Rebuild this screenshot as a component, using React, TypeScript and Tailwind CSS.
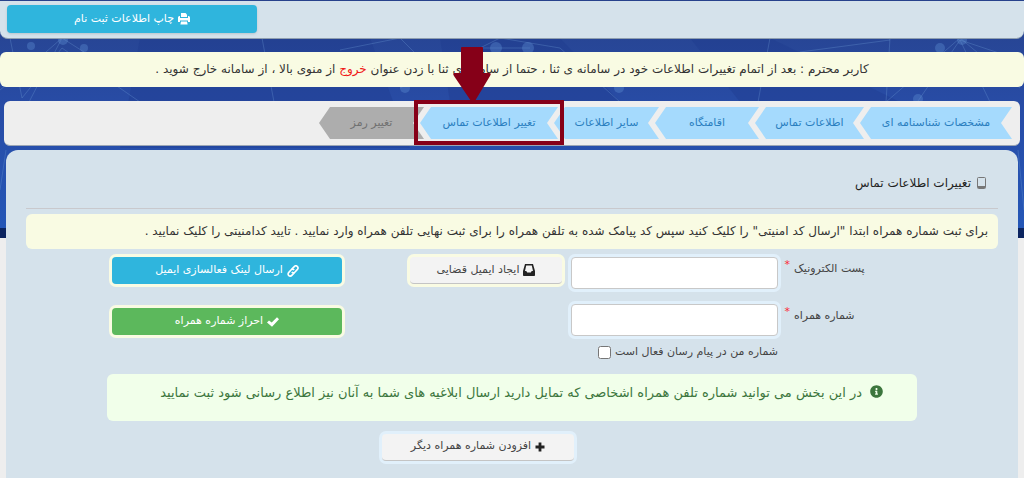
import type { ReactNode } from 'react';
import { FaInfoCircle } from 'react-icons/fa';

const steps = [
  { title: 'مشخصات شناسنامه ای', size: 'w-[152px]' },
  { title: 'اطلاعات تماس', size: 'w-[109px]' },
  { title: 'اقامتگاه', size: 'w-[104px]' },
  { title: 'سایر اطلاعات', size: 'w-[105px]' },
  { title: 'تغییر اطلاعات تماس', size: 'w-[138px]' },
  { title: 'تغییر رمز', size: 'w-[105px]' },
];

function Backdrop() {
  return (
    <svg
      aria-hidden="true"
      className="absolute inset-x-0 top-0 -z-10 h-[238px] w-full"
      viewBox="0 0 1024 238"
      preserveAspectRatio="none"
    >
      <defs>
        <linearGradient id="sky" x1="0" y1="0" x2="0" y2="1">
          <stop offset="0" stopColor="#27428c" />
          <stop offset="0.45" stopColor="#284ca6" />
          <stop offset="1" stopColor="#2457b8" />
        </linearGradient>
      </defs>
      <rect width="1024" height="238" fill="url(#sky)" />
      <path d="M140 38h230l40 110H120zM440 38h120l60 64H450zM690 38h80l130 64H740z" fill="#1d3a8c" opacity="0.35" />
      <path
        d="M0 90L46 52 62 38 84 52M10 38l12 60 40-50 78 54M62 38L28 104M262 38l12 64M340 50l60-12 40 40M400 88l100-50 60 10 60 54M480 48h50M770 38l-12 64M890 38l-4 64 74-64 60 50M960 40l30 62M918 101l42-61 60 20M800 52l90-12M0 190l6-40M1018 150l6 60"
        fill="none"
        stroke="#6f9ed8"
        strokeWidth="1"
        opacity="0.3"
      />
      <g fill="#5b8bd0" opacity="0.4">
        <circle cx="63" cy="40" r="5" />
        <circle cx="84" cy="48" r="4" />
        <circle cx="31" cy="46" r="4" />
        <circle cx="496" cy="48" r="6" />
        <circle cx="528" cy="48" r="6" />
        <circle cx="405" cy="88" r="5" />
        <circle cx="619" cy="88" r="5" />
        <circle cx="918" cy="99" r="5" />
        <circle cx="940" cy="48" r="5" />
        <circle cx="962" cy="40" r="5" />
      </g>
      <rect y="228" width="1024" height="10" fill="#0b2460" />
    </svg>
  );
}

function Notice({ children, className }: { children: ReactNode; className: string }) {
  return (
    <p className={`rounded-md bg-[#f9fbe3] text-[12px] leading-[35px] whitespace-nowrap text-[#333] ${className}`}>
      {children}
    </p>
  );
}

function PrintIcon() {
  return (
    <svg viewBox="0 0 12 12" className="size-3 shrink-0" fill="currentColor">
      <path d="M3 0h4.500L9 1.500V4H3z" />
      <path fillRule="evenodd" d="M1.500 3H2v2h8V3h.5A1.500 1.500 0 0 1 12 4.500V9h-2V7.500H2V9H0V4.500A1.500 1.500 0 0 1 1.500 3z" />
      <path d="M3 8.500h6l.6 3H2.400z" />
    </svg>
  );
}

function InboxIcon() {
  return (
    <svg viewBox="0 0 12 12" className="size-3 shrink-0" fill="#222">
      <path fillRule="evenodd" d="M2 0h8l2 7v4.200a.8.8 0 0 1-.8.8H.8a.8.8 0 0 1-.8-.8V7zm1.200 1.600L2 7h1.300l.9 1.600h3.600L8.700 7H10L8.800 1.600z" />
    </svg>
  );
}

function LinkIcon() {
  return (
    <svg viewBox="0 0 12 12" className="size-3 shrink-0" fill="none" stroke="currentColor" strokeWidth="1.600">
      <path d="M4.600 4.400l2.600-2.800a2 2 0 0 1 3.200 2.800L7.800 7.200a1.800 1.800 0 0 1-2.900-.4" />
      <path d="M7.400 7.600l-2.600 2.800a2 2 0 0 1-3.200-2.800l2.600-2.800a1.800 1.800 0 0 1 2.900.4" />
    </svg>
  );
}

function CheckIcon() {
  return (
    <svg viewBox="0 0 12 12" className="size-3 shrink-0" fill="currentColor">
      <path d="M10 1.200l2 2-7 7.600L0 6.600l2-2 2.700 2z" />
    </svg>
  );
}

function PlusIcon() {
  return (
    <svg viewBox="0 0 10 10" className="size-[10px] shrink-0" fill="#222">
      <path d="M3.600.5h2.800v3.100h3.100v2.800H6.400v3.100H3.600V6.400H.5V3.600h3.100z" />
    </svg>
  );
}

function PhoneIcon() {
  return (
    <svg viewBox="0 0 9 12" className="h-3 w-[9px] shrink-0" fill="none" stroke="#777">
      <rect x="0.500" y="0.500" width="8" height="11" rx="1" />
      <path d="M1 10h7" strokeWidth="2" />
    </svg>
  );
}

export default function App() {
  return (
    <div
      dir="rtl"
      lang="fa"
      className="relative isolate min-h-screen overflow-hidden bg-[#eee] pt-px font-['DejaVu_Sans',sans-serif] text-[#444]"
    >
      <Backdrop />

      <header className="flex justify-end rounded-b-lg border-b border-[#8f9fb0] bg-[#d5e2eb] px-[7px] pt-1 pb-[5px]">
        <button className="flex h-7 w-[250px] items-center justify-center gap-1 rounded bg-[#2fb5dd] text-[11px] text-white shadow">
          <PrintIcon />
          چاپ اطلاعات ثبت نام
        </button>
      </header>

      <Notice className="mt-[13px] text-center">
        کاربر محترم : بعد از اتمام تغییرات اطلاعات خود در سامانه ی ثنا ، حتما از سامانه ی ثنا با زدن عنوان{' '}
        <a href="#exit" className="text-[#f01818]">خروج</a> از منوی بالا ، از سامانه خارج شوید .
      </Notice>

      <nav className="mx-1 mt-[14px] rounded-md border-b border-[#9aa5b5] bg-[#eee] py-1.5 ps-2">
        <ol className="flex">
          {steps.map((step, i) => (
            <li key={step.title} className={`relative h-8 ${step.size} ${i > 0 ? '-ms-1' : ''}`}>
              <a
                href={`#step-${i + 1}`}
                className={`flex h-full items-center justify-center text-[11px] whitespace-nowrap [clip-path:polygon(11px_0,100%_0,calc(100%-11px)_50%,100%_100%,11px_100%,0_50%)] ${
                  i === 5 ? 'bg-[#adadad] text-[#707070]' : 'bg-[#a5dafd] text-[#2b7fc0]'
                }`}
              >
                {step.title}
              </a>
              {i === 4 && (
                <div aria-hidden="true" className="absolute -inset-x-[6px] -top-[7px] -bottom-[6px] z-10 border-4 border-[#860018]">
                  <svg viewBox="0 0 38 56" className="absolute -top-[57px] left-[35px] h-[56px] w-[38px]" fill="#860018">
                    <path d="M9 0h20q1 0 1 1v25h6q3 0 1 3L22 54q-2 3-4 0L1 29q-2-3 1-3h6V1q0-1 1-1z" />
                  </svg>
                </div>
              )}
            </li>
          ))}
        </ol>
      </nav>

      <main className="mx-1.5 mt-1 min-h-[329px] rounded-t-xl bg-[#d5e2eb] px-5">
        <h1 className="flex h-[59px] items-center gap-1.5 border-b border-[#c9c9cd] px-3 pt-2 text-[12px] text-[#222]">
          <PhoneIcon />
          تغییرات اطلاعات تماس
        </h1>

        <Notice className="mt-[5px] px-2.5">
          برای ثبت شماره همراه ابتدا "ارسال کد امنیتی" را کلیک کنید سپس کد پیامک شده به تلفن همراه را برای ثبت نهایی تلفن همراه وارد نمایید . تایید کدامنیتی را کلیک نمایید .
        </Notice>

        <form className="mt-1 text-[11px]">
          <div className="grid grid-cols-[216fr_217fr_220fr_236fr_83fr] items-start *:min-w-0">
            <label htmlFor="email" className="flex justify-end gap-1 pt-2 ps-2">
              <span>پست الکترونیک</span>
              <span className="-mt-1 w-2 text-red-500">*</span>
            </label>
            <input
              id="email"
              type="email"
              className="mt-1 mr-1 ml-1.5 h-8 w-[calc(100%-10px)] rounded border border-[#c8c8c8] bg-white px-2 ring-3 ring-[#e1f0fb]"
            />
            <button
              type="button"
              className="ms-[3px] mt-1 flex h-[27px] w-[152px] items-center justify-center gap-1 rounded border-b border-[#c4c4c4] bg-[#f3f3f3] ring-3 ring-[#f9fbe3]"
            >
              <InboxIcon />
              ایجاد ایمیل قضایی
            </button>
            <button
              type="button"
              className="mx-[3px] mt-1 flex h-[27px] items-center justify-center gap-1 rounded bg-[#2fb5dd] text-white ring-3 ring-[#f9fbe3]"
            >
              <LinkIcon />
              ارسال لینک فعالسازی ایمیل
            </button>
          </div>

          <div className="mt-[11px] grid grid-cols-[216fr_217fr_220fr_236fr_83fr] items-start *:min-w-0">
            <label htmlFor="mobile" className="flex justify-end gap-1 pt-2 ps-2">
              <span>شماره همراه</span>
              <span className="-mt-1 w-2 text-red-500">*</span>
            </label>
            <input
              id="mobile"
              type="tel"
              className="mt-1 mr-1 ml-1.5 h-8 w-[calc(100%-10px)] rounded border border-[#c8c8c8] bg-white px-2 ring-3 ring-[#e1f0fb]"
            />
            <button
              type="button"
              className="col-start-4 mx-[3px] mt-2 flex h-[27px] items-center justify-center gap-1 rounded bg-[#5cb85c] text-white ring-3 ring-[#f9fbe3]"
            >
              <CheckIcon />
              احراز شماره همراه
            </button>
            <label className="col-start-2 flex items-center gap-1 ps-1 pt-2 whitespace-nowrap">
              شماره من در پیام رسان فعال است
              <input type="checkbox" className="size-[13px]" />
            </label>
          </div>

          <p className="mx-[81px] mt-[13px] flex h-[47px] items-start gap-2 rounded-md bg-[#f1ffea] ps-[34px] pt-[9px] text-[13px] whitespace-nowrap text-[#3c763d]">
            <FaInfoCircle className="mt-0.5 size-[13px] shrink-0" />
            در این بخش می توانید شماره تلفن همراه اشخاصی که تمایل دارید ارسال ابلاغیه های شما به آنان نیز اطلاع رسانی شود ثبت نمایید
          </p>

          <div className="mt-[13px] flex justify-center ps-[68px]">
            <button
              type="button"
              className="flex h-[27px] w-[192px] items-center justify-center gap-1 rounded border-b border-[#c4c4c4] bg-[#f3f3f3] ring-3 ring-[#e1f0fb]"
            >
              <PlusIcon />
              افزودن شماره همراه دیگر
            </button>
          </div>
        </form>
      </main>
    </div>
  );
}
